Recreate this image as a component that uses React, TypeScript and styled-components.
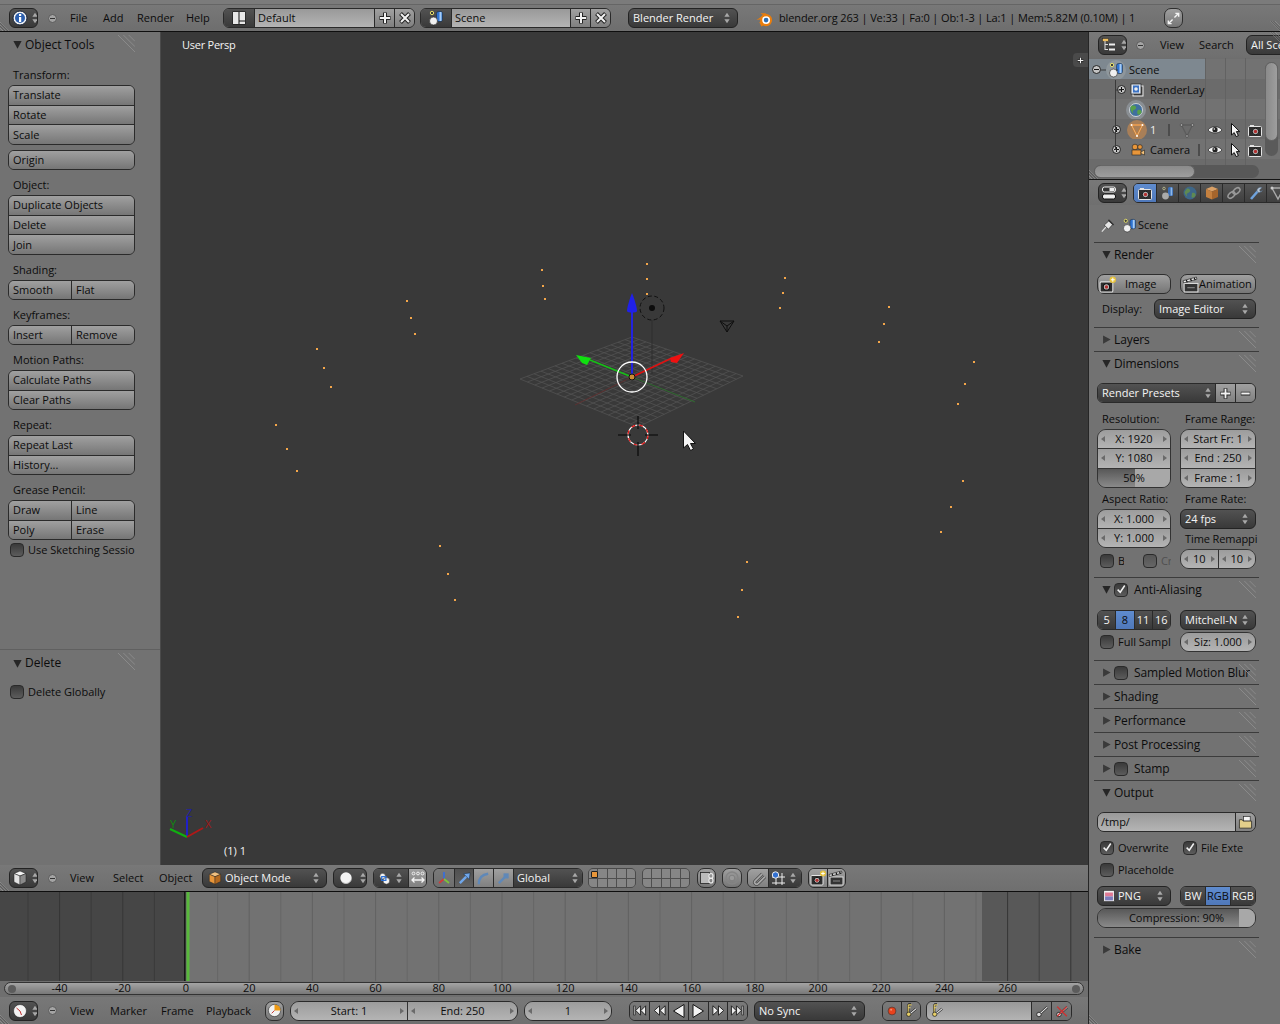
import React from 'react';
import styled, { createGlobalStyle, css } from 'styled-components';

const Global = createGlobalStyle`
  html, body { margin: 0; padding: 0; background: #727272; overflow: hidden; }
  * { box-sizing: border-box; }
  #root { width: 1280px; height: 1024px; }
`;

/* ---------- icons ---------- */
const K = '#1c1c1c';
const ICONS: Record<string, React.ReactNode> = {
  updown: <><polygon points="5,6.5 8,2 11,6.5" fill="#a8a8a8" /><polygon points="5,9.5 8,14 11,9.5" fill="#a8a8a8" /></>,
  info: <><circle cx="8" cy="8" r="7" fill="#f2f2f2" stroke="#16233a" /><circle cx="8" cy="8" r="5" fill="#2c5fae" /><rect x="7" y="4" width="2.2" height="2" fill="#fff" /><rect x="7" y="7" width="2.2" height="5" fill="#fff" /></>,
  cube: <><polygon points="8,1 14,3.5 8,6 2,3.5" fill="#f4f4f4" stroke={K} strokeWidth=".5" /><polygon points="2,3.5 8,6 8,15 2,12" fill="#e2e2e2" stroke={K} strokeWidth=".5" /><polygon points="14,3.5 8,6 8,15 14,12" fill="#8a8a8a" stroke={K} strokeWidth=".5" /></>,
  layout: <><rect x="1.5" y="1.5" width="13" height="13" fill="#111" /><rect x="2" y="2" width="5.5" height="12" fill="#e8e8e8" /><rect x="8.5" y="2" width="5.5" height="8.5" fill="#e8e8e8" /><rect x="8.5" y="11.5" width="5.5" height="2.5" fill="#e8e8e8" /></>,
  scene: <><rect x="8.5" y="1.5" width="6" height="10" rx="2" fill="#2f72cf" stroke="#123" strokeWidth=".5" /><rect x="11.5" y="2" width="2" height="9" fill="#a7cdf5" /><circle cx="5.5" cy="11" r="4" fill="#f0f0f0" stroke="#222" strokeWidth=".6" /><circle cx="4" cy="3" r="1.7" fill="#3a3a3a" stroke="#e6e06a" /></>,
  plus: <><path d="M8 2.5v11M2.5 8h11" stroke="#222" strokeWidth="4" /><path d="M8 3v10M3 8h10" stroke="#f2f2f2" strokeWidth="2" /></>,
  minus: <><path d="M3 8h10" stroke="#222" strokeWidth="4" /><path d="M3.5 8h9" stroke="#f2f2f2" strokeWidth="2" /></>,
  close: <><path d="M3.5 3.5l9 9M12.5 3.5l-9 9" stroke="#222" strokeWidth="4" /><path d="M4 4l8 8M12 4l-8 8" stroke="#f2f2f2" strokeWidth="2" /></>,
  blender: <><path d="M0.5 9.5L7 5 4 3h5l5 4" fill="#e87d0d" /><path d="M6 15l-2-4" stroke="#e87d0d" strokeWidth="2" /><circle cx="9.5" cy="9.5" r="4.7" fill="#fff" stroke="#e87d0d" strokeWidth="2" /><circle cx="9.5" cy="9.5" r="2.2" fill="#2c6eb5" /></>,
  fullscreen: <><path d="M9 7l4-4M10 2.5h3.5V6M7 9l-4 4M6 13.5H2.5V10" stroke="#f4f4f4" strokeWidth="1.5" fill="none" /></>,
  outliner: <><rect x="1.5" y="1.5" width="6" height="3" fill="#f0c060" stroke="#222" strokeWidth=".5" /><path d="M4 4v9M4 7.5h3M4 12.5h3" stroke="#ddd" /><rect x="8" y="6.5" width="6" height="2" fill="#eee" /><rect x="8" y="11.5" width="6" height="2" fill="#eee" /></>,
  buttons: <><rect x="1.5" y="2" width="13" height="5" rx="2" fill="#333" stroke="#eee" /><rect x="8.5" y="3" width="5" height="3" fill="#eee" /><rect x="1.5" y="9" width="13" height="5" rx="2" fill="#eee" stroke="#111" /></>,
  cam: <><rect x="1.5" y="4.5" width="13" height="10" rx="1" fill="#2d2d2d" stroke="#e4e4e4" /><rect x="3" y="3" width="4" height="2" fill="#e4e4e4" /><circle cx="8.5" cy="9.5" r="3.2" fill="#bbb" stroke="#111" /><circle cx="8.5" cy="9.5" r="1.7" fill="#b33030" /></>,
  camNew: <><rect x="1" y="5.5" width="12" height="9.5" rx="1" fill="#2d2d2d" stroke="#e4e4e4" /><circle cx="7" cy="10.3" r="3" fill="#bbb" stroke="#111" /><circle cx="7" cy="10.3" r="1.6" fill="#b33030" /><circle cx="13" cy="3.5" r="3" fill="#e6c23a" /><path d="M13 1.7v3.6M11.2 3.5h3.6" stroke="#fff" /></>,
  clapper: <><rect x="2" y="7" width="13" height="8" fill="#333" stroke="#ddd" /><path d="M1.5 6.5L14 3 13.5 1 1 4.5z" fill="#eee" stroke="#111" strokeWidth=".6" /><path d="M4 3.8l1 2M8 2.7l1 2M11.5 1.8l1 2" stroke="#111" strokeWidth="1.2" /><path d="M5 11h7" stroke="#888" /></>,
  sceneTab: <><rect x="8" y="2" width="5" height="9" rx="1.5" fill="#3a6fb8" /><rect x="10.6" y="2.5" width="1.6" height="8" fill="#8fb8e8" /><circle cx="5.5" cy="11" r="3.4" fill="#aaa" /><circle cx="4" cy="3.5" r="1.3" fill="#555" stroke="#cc9" strokeWidth=".7" /></>,
  world: <><circle cx="8" cy="8" r="6.5" fill="#3f6f9f" stroke="#e8e8e8" strokeWidth=".8" /><path d="M5 3.5c3 0 4 2 2.5 3.5S4 8 5 10.5 3 10 2.5 7 4 3.5 5 3.5zM10 8c2-1 4 .5 3.5 2.5S10 13.5 9.5 12 9 8.5 10 8z" fill="#58a04a" /></>,
  worldDim: <><circle cx="8" cy="8" r="6.5" fill="#3e6688" /><path d="M5 3.5c3 0 4 2 2.5 3.5S4 8 5 10.5 3 10 2.5 7zM10 8c2-1 4 .5 3.5 2.5S10 13.5 9.5 12z" fill="#5f8a52" /></>,
  box: <><polygon points="8,1.5 14,4 8,6.5 2,4" fill="#d9a066" /><polygon points="2,4 8,6.5 8,14.5 2,12" fill="#c4803f" /><polygon points="14,4 8,6.5 8,14.5 14,12" fill="#a5652c" /></>,
  boxBright: <><polygon points="8,1 14.5,3.8 8,6.5 1.5,3.8" fill="#f0c080" stroke="#222" strokeWidth=".5" /><polygon points="1.5,3.8 8,6.5 8,15 1.5,12" fill="#e8963a" stroke="#222" strokeWidth=".5" /><polygon points="14.5,3.8 8,6.5 8,15 14.5,12" fill="#b56a20" stroke="#222" strokeWidth=".5" /></>,
  link: <><ellipse cx="5.5" cy="10" rx="4" ry="2.5" transform="rotate(-40 5.5 10)" fill="none" stroke="#9a9a9a" strokeWidth="1.5" /><ellipse cx="10.5" cy="6" rx="4" ry="2.5" transform="rotate(-40 10.5 6)" fill="none" stroke="#9a9a9a" strokeWidth="1.5" /></>,
  wrench: <><path d="M3 14L10 6" stroke="#6fa2dc" strokeWidth="2.6" /><path d="M9 6.5A3.6 3.6 0 0 1 14 2.5L11.5 5l1 1.5 2-1A3.6 3.6 0 0 1 9 6.5z" fill="#b8c6d6" stroke="#46607c" strokeWidth=".5" /></>,
  meshTab: <><path d="M2 3h12L8 14z" fill="none" stroke="#aaa" strokeWidth="1.4" /><circle cx="2" cy="3" r="1.5" fill="#ccc" /><circle cx="14" cy="3" r="1.5" fill="#ccc" /></>,
  mesh: <><path d="M2.5 3h11L8 14z" fill="none" stroke="#d77a1c" strokeWidth="1.8" /><path d="M2.5 3h11L8 14z" fill="none" stroke="#f0f0f0" strokeWidth=".5" /><circle cx="2.5" cy="3" r="1" fill="#fff" /><circle cx="13.5" cy="3" r="1" fill="#fff" /><circle cx="8" cy="14" r="1" fill="#fff" /></>,
  meshData: <><path d="M2.5 3h11L8 14z" fill="none" stroke="#5c5c5c" strokeWidth="1.3" /><circle cx="2.5" cy="3" r="1.3" fill="#aaa" stroke="#333" strokeWidth=".5" /><circle cx="13.5" cy="3" r="1.3" fill="#aaa" stroke="#333" strokeWidth=".5" /><circle cx="8" cy="14" r="1.3" fill="#aaa" stroke="#333" strokeWidth=".5" /></>,
  camObj: <><circle cx="6" cy="5" r="2.8" fill="#e8963a" stroke="#222" strokeWidth=".6" /><circle cx="11" cy="5" r="2.3" fill="#e8963a" stroke="#222" strokeWidth=".6" /><rect x="3" y="8" width="9" height="5" fill="#e8963a" stroke="#222" strokeWidth=".6" /><polygon points="12,10 15.5,8 15.5,13 12,11.5" fill="#f4c27a" stroke="#222" strokeWidth=".6" /></>,
  layers: <><rect x="4" y="4" width="10" height="10" fill="#444" stroke="#eee" /><rect x="2" y="2" width="10" height="10" fill="#dfe6f0" stroke="#222" strokeWidth=".7" /><rect x="4" y="3.5" width="6" height="7" fill="#3b72c4" /><circle cx="7" cy="7" r="1.8" fill="#eee" /></>,
  eye: <><path d="M1 8c3-4.5 11-4.5 14 0-3 4-11 4-14 0z" fill="#f4f4f4" stroke="#222" strokeWidth=".7" /><circle cx="8" cy="7.7" r="2.6" fill="#222" /><circle cx="7.3" cy="7" r=".8" fill="#fff" /></>,
  pointer: <path d="M4.5 1.5v11.5l2.7-2.4 2 4 2.2-1-2-4h3.3z" fill="#f4f4f4" stroke="#111" />,
  pin: <><path d="M2 14.5l4.5-5" stroke="#dedede" strokeWidth="1.4" /><path d="M4.5 7.5L9.5 3l4 4-4.5 5z" fill="#e4e4e4" stroke="#333" strokeWidth=".8" /><path d="M9 2l5.5 5.5" stroke="#333" strokeWidth="1.6" /></>,
  folder: <><rect x="6" y="1.5" width="7" height="5" fill="#f6f6f6" stroke="#222" strokeWidth=".7" /><path d="M1.5 5h3l1 1.5h9v7.5h-13z" fill="#e3cf8b" stroke="#222" strokeWidth=".8" /></>,
  png: <><rect x="2" y="1.5" width="12" height="13" fill="#f2f2f2" stroke="#222" strokeWidth=".7" /><rect x="3.5" y="4" width="9" height="4.5" fill="#e07a94" /><rect x="3.5" y="8.5" width="9" height="4.5" fill="#7c7cbc" /></>,
  sphere: <><circle cx="8" cy="8" r="6.5" fill="#f4f4f4" /><path d="M3 12a6.5 6.5 0 0 0 11-2" stroke="#bbb" fill="none" /></>,
  pivot: <><circle cx="6" cy="5.5" r="3" fill="#f4f4f4" stroke="#222" strokeWidth=".5" /><circle cx="10" cy="10.5" r="3.5" fill="#f4f4f4" stroke="#222" strokeWidth=".5" /><rect x="5" y="6" width="4.5" height="4" fill="none" stroke="#2a6fd6" strokeWidth="1.3" /></>,
  center: <><circle cx="3.5" cy="3.5" r="1.4" fill="none" stroke="#eee" /><circle cx="8" cy="3.5" r="1.4" fill="none" stroke="#eee" /><circle cx="12.5" cy="3.5" r="1.4" fill="none" stroke="#eee" /><path d="M2 10h12M4.5 7.5L2 10l2.5 2.5M11.5 7.5L14 10l-2.5 2.5" fill="none" stroke="#f4f4f4" strokeWidth="1.3" /></>,
  manip: <><path d="M8 9V2" stroke="#3a6fd6" strokeWidth="1.8" /><path d="M8 9l-5 4" stroke="#d13a3a" strokeWidth="1.8" /><path d="M8 9l5 4" stroke="#7ec23a" strokeWidth="1.8" /></>,
  arrow: <><path d="M3 13L11 5" stroke="#6fa6ea" strokeWidth="2.6" /><polygon points="14,2 13,9 7,3" fill="#6fa6ea" stroke="#123" strokeWidth=".5" /></>,
  curve: <path d="M3 14c0-6 3-10 10-11" fill="none" stroke="#5f88b8" strokeWidth="2.6" />,
  scaleT: <><path d="M3 13L9 7" stroke="#5f88b8" strokeWidth="2.6" /><rect x="8" y="2.5" width="5.5" height="5.5" fill="#5f88b8" /></>,
  lock: <><rect x="1.5" y="2.5" width="9" height="11" fill="#bbb" stroke="#222" strokeWidth=".8" /><ellipse cx="12" cy="6" rx="2" ry="2.5" fill="none" stroke="#eee" strokeWidth="1.2" /><ellipse cx="12" cy="10.5" rx="2" ry="2.5" fill="none" stroke="#eee" strokeWidth="1.2" /></>,
  target: <><circle cx="8" cy="8" r="6" fill="none" stroke="#858585" strokeWidth="1.4" /><circle cx="8" cy="8" r="2.8" fill="#9a9a9a" stroke="#808080" /></>,
  magnet: <><path d="M12 3L4.5 10.5a2 2 0 0 0 3 3L15 6" fill="none" stroke="#4a4a4a" strokeWidth="3.4" /><path d="M12 3L4.5 10.5a2 2 0 0 0 3 3L15 6" fill="none" stroke="#a8a8a8" strokeWidth="1.8" /></>,
  snap: <><path d="M6 2v13M12 3v12M2 7h13M2 13h13" stroke="#eee" /><circle cx="5.5" cy="5" r="3.2" fill="#3170d2" stroke="#eee" /></>,
  clock: <><circle cx="8" cy="8" r="6.5" fill="#f2f2f2" stroke="#222" strokeWidth=".6" /><path d="M8 8L4.5 5M8 8l1.5 4" stroke="#c23030" /></>,
  clockO: <><circle cx="8" cy="8" r="6.5" fill="#f2f2f2" stroke="#222" strokeWidth=".6" /><path d="M8 8V1.5A6.5 6.5 0 0 1 14.5 8z" fill="#ee9a14" /><path d="M8 8L5 11" stroke="#c23030" /></>,
  jumpS: <><path d="M2.5 3v10" stroke="#111" strokeWidth="2.2" /><path d="M2.5 3.5v9" stroke="#eee" strokeWidth=".8" /><path d="M9 3L4 8l5 5zM14.5 3l-5 5 5 5z" fill="#eee" stroke="#111" strokeWidth=".9" /></>,
  prevK: <path d="M8 3L2.5 8 8 13zM14 3L8.5 8l5.5 5z" fill="#eee" stroke="#111" strokeWidth=".9" />,
  rev: <path d="M13 1.5L2.5 8 13 14.5z" fill="#f4f4f4" stroke="#111" />,
  play: <path d="M3 1.5L13.5 8 3 14.5z" fill="#f4f4f4" stroke="#111" />,
  nextK: <path d="M2 3l5.5 5L2 13zM8 3l5.5 5L8 13z" fill="#eee" stroke="#111" strokeWidth=".9" />,
  jumpE: <><path d="M13.5 3v10" stroke="#111" strokeWidth="2.2" /><path d="M13.5 3.5v9" stroke="#eee" strokeWidth=".8" /><path d="M1.5 3l5 5-5 5zM7 3l5 5-5 5z" fill="#eee" stroke="#111" strokeWidth=".9" /></>,
  rec: <><circle cx="8" cy="8" r="4.5" fill="#e8421c" stroke="#333" strokeWidth=".7" /><circle cx="7" cy="6.5" r="1.2" fill="#f58a6a" /></>,
  keyY: <><path d="M4.5 1.5v9M4.5 1.5h3" stroke="#222" strokeWidth="2.4" fill="none" /><path d="M4.5 2v8.5M4.5 2H8M4.5 5H7" stroke="#e7cf68" strokeWidth="1.2" fill="none" /><circle cx="5" cy="12" r="2.3" fill="#e7cf68" stroke="#222" strokeWidth=".8" /><path d="M7 11l6-5" stroke="#222" strokeWidth="2.4" /><path d="M7 11l6-5" stroke="#eee" strokeWidth="1.2" /></>,
  keyW: <><circle cx="4.5" cy="12" r="2.6" fill="#ddd" stroke="#222" /><path d="M6.5 10.5L14 3.5" stroke="#222" strokeWidth="2.6" /><path d="M6.5 10.5L14 3.5" stroke="#eee" strokeWidth="1.2" /></>,
  keyX: <><circle cx="4.5" cy="12" r="2.6" fill="#ddd" stroke="#222" /><path d="M6.5 10.5L14 3.5" stroke="#222" strokeWidth="2.6" /><path d="M6.5 10.5L14 3.5" stroke="#eee" strokeWidth="1.2" /><path d="M2.5 3l11 11M13.5 3l-11 11" stroke="#d03030" strokeWidth="1.5" /></>,
  grip: <path d="M0 0l16 16M5 0l11 11M10 0l6 6" stroke="#8c8c8c" strokeWidth=".9" fill="none" />,
  corner: <><path d="M0 4l12 12M0 8l8 8M0 12l4 4" stroke="#a0a0a0" strokeWidth=".8" /><path d="M0 5l11 11M0 9l7 7" stroke="#3c3c3c" strokeWidth=".6" /></>,
  cornerTR: <><path d="M0 0l16 16M4 0l12 12M8 0l8 8" stroke="#a0a0a0" strokeWidth=".8" /><path d="M1 0l15 15M5 0l11 11" stroke="#3c3c3c" strokeWidth=".6" /></>,
  arrowOpen: <polygon points="2,3 14,3 8,14" fill="#262626" />,
  arrowClosed: <polygon points="3,2 3,14 14,8" fill="#3a3a3a" />,
  check: <path d="M3.5 7.5L7 11l6-9" fill="none" stroke="#f2f2f2" strokeWidth="2" />,
};

const Glyph = styled.svg<{ $m?: string }>`
  display: block;
  flex: none;
  margin: ${p => p.$m ?? '0'};
`;
const Icon = ({ n, s = 16, m }: { n: string; s?: number; m?: string }) => (
  <Glyph viewBox="0 0 16 16" width={s} height={s} $m={m}>{ICONS[n]}</Glyph>
);

/* ---------- frame ---------- */
const FONT = `"Open Sans", "Liberation Sans", sans-serif`;
const Root = styled.div`
  position: relative;
  width: 1280px;
  height: 1024px;
  overflow: hidden;
  background: #727272;
  font: 11px/14px ${FONT};
  color: #0c0c0c;
  display: flex;
  flex-direction: column;
`;
const Body = styled.div`
  flex: 1;
  display: flex;
  min-height: 0;
`;
const LeftCol = styled.div`
  width: 1088px;
  display: flex;
  flex-direction: column;
`;
const RightCol = styled.div`
  width: 192px;
  border-left: 1px solid #262626;
  display: flex;
  flex-direction: column;
  overflow: hidden;
`;
const Bar = styled.div<{ $h: number; $pad?: number; $top?: boolean; $black?: boolean }>`
  position: relative;
  flex: none;
  height: ${p => p.$h}px;
  display: flex;
  align-items: center;
  padding: ${p => (p.$top ? 5 : 0)}px 0 0 ${p => p.$pad ?? 9}px;
  overflow: hidden;
  ${p => p.$black && 'border-bottom: 1px solid #0e0e0e;'}
  background: ${p => (p.$top
    ? 'linear-gradient(#7b7b7b 0 4px, #656565 4px 5px, #787878 5px, #6e6e6e)'
    : 'linear-gradient(#787878, #6f6f6f)')};
`;
const CornerMark = styled.div<{ $l?: number; $r?: number; $t?: number; $b?: number }>`
  position: absolute;
  ${p => p.$l != null && `left:${p.$l}px;`}
  ${p => p.$r != null && `right:${p.$r}px;`}
  ${p => p.$t != null && `top:${p.$t}px;`}
  ${p => p.$b != null && `bottom:${p.$b}px;`}
`;

/* ---------- buttons ---------- */
const darkFace = css`
  background: linear-gradient(#525252, #393939);
  color: #f4f4f4;
`;
const Sel = styled.div<{ $w: number; $ml?: number; $pl?: number }>`
  flex: none;
  width: ${p => p.$w}px;
  margin-left: ${p => p.$ml ?? 0}px;
  height: 20px;
  border: 1px solid #232323;
  border-radius: 6px;
  ${darkFace}
  display: flex;
  align-items: center;
  padding: 0 3px 0 ${p => p.$pl ?? 4}px;
  white-space: nowrap;
  overflow: hidden;
`;
const SelText = styled.span`
  flex: 1;
  overflow: hidden;
`;
const Dot = styled.div<{ $ml?: number }>`
  flex: none;
  width: 9px;
  height: 9px;
  margin-left: ${p => p.$ml ?? 10}px;
  border-radius: 50%;
  background: #a4a4a4;
  border: 1px solid #5a5a5a;
  position: relative;
  &::after {
    content: '';
    position: absolute;
    left: 1px;
    right: 1px;
    top: 3px;
    height: 1px;
    background: #333;
  }
`;
const Menu = styled.div<{ $w: number; $ml?: number }>`
  flex: none;
  width: ${p => p.$w}px;
  margin-left: ${p => p.$ml ?? 0}px;
  white-space: nowrap;
`;
const StatusText = styled(Menu)`
  letter-spacing: -0.12px;
`;
const Joined = styled.div<{ $w: number; $ml?: number; $r?: number }>`
  flex: none;
  display: flex;
  width: ${p => p.$w}px;
  margin-left: ${p => p.$ml ?? 0}px;
  height: 20px;
  border: 1px solid #2a2a2a;
  border-radius: ${p => p.$r ?? 6}px;
  overflow: hidden;
`;
const Seg = styled.div<{ $w?: number; $dark?: boolean; $on?: boolean; $input?: boolean; $center?: boolean; $dim?: boolean; $press?: boolean }>`
  flex: ${p => (p.$w ? 'none' : '1')};
  ${p => p.$w && `width:${p.$w}px;`}
  min-width: 0;
  display: flex;
  align-items: center;
  justify-content: ${p => (p.$center ? 'center' : 'flex-start')};
  white-space: nowrap;
  overflow: hidden;
  background: ${p =>
    p.$on
      ? 'linear-gradient(#5f8ccf,#4f78ba)'
      : p.$dark
        ? 'linear-gradient(#525252,#393939)'
        : p.$input
          ? 'linear-gradient(#999,#b4b4b4)'
          : p.$press
            ? 'linear-gradient(#505050,#626262)'
            : p.$dim
              ? 'linear-gradient(#7a7a7a,#6e6e6e)'
              : 'linear-gradient(#a0a0a0,#808080)'};
  color: ${p => (p.$dark ? '#f4f4f4' : '#0c0c0c')};
  & + & {
    border-left: 1px solid #2a2a2a;
  }
`;
const SegLabel = styled.span<{ $pl?: number }>`
  padding-left: ${p => p.$pl ?? 3}px;
`;
const LayerGrid = styled.div<{ $ml: number }>`
  flex: none;
  width: 48px;
  height: 20px;
  margin-left: ${p => p.$ml}px;
  border: 1px solid #4a4a4a;
  border-radius: 5px;
  overflow: hidden;
  display: grid;
  grid-template-columns: repeat(5, 1fr);
  grid-template-rows: 1fr 1fr;
  gap: 1px;
  background: #4e4e4e;
`;
const LayerCell = styled.div<{ $active?: boolean }>`
  background: #868686;
  position: relative;
  ${p =>
    p.$active &&
    `&::after{content:'';position:absolute;left:2px;top:2px;width:5px;height:5px;border-radius:1px;background:#e8963a;border:1px solid #222;}`}
`;

/* tool shelf */
const Shelf = styled.div`
  position: relative;
  width: 161px;
  background: #727272;
  border-right: 1px solid #4a4a4a;
  padding-left: 8px;
  display: flex;
  flex-direction: column;
  flex: none;
`;
const ShelfHead = styled.div<{ $line?: boolean }>`
  position: relative;
  height: 24px;
  margin: ${p => (p.$line ? '89px 0 0 -8px' : '0 0 4px -8px')};
  padding: 1px 0 0 12px;
  display: flex;
  align-items: center;
  font-size: 12px;
  ${p => p.$line && 'border-top: 1px solid #606060; height: 26px;'}
`;
const GripSlot = styled.div<{ $r: number }>`
  position: absolute;
  right: ${p => p.$r}px;
  top: 3px;
`;
const ShelfLabel = styled.div`
  height: 20px;
  margin-top: 5px;
  padding: 3px 0 0 5px;
  white-space: nowrap;
`;
const ToolGroup = styled.div<{ $rows: number; $mt?: number }>`
  width: 127px;
  height: ${p => p.$rows * 20}px;
  margin-top: ${p => p.$mt ?? 0}px;
  border: 1px solid #2b2b2b;
  border-radius: 6px;
  overflow: hidden;
  display: flex;
  flex-direction: column;
`;
const ToolRow = styled.div`
  flex: 1;
  display: flex;
  min-height: 0;
  & + & {
    border-top: 1px solid #2b2b2b;
  }
`;
const ToolBtn = styled.div`
  flex: 1;
  display: flex;
  align-items: center;
  padding-left: 4px;
  background: linear-gradient(#a0a0a0, #767676);
  white-space: nowrap;
  & + & {
    border-left: 1px solid #2b2b2b;
  }
`;
const CheckRow = styled.div<{ $mt?: number; $ml?: number; $dim?: boolean; $w?: number }>`
  display: flex;
  align-items: center;
  height: 20px;
  margin-top: ${p => p.$mt ?? 0}px;
  margin-left: ${p => p.$ml ?? 0}px;
  ${p => p.$w && `width:${p.$w}px;`}
  white-space: nowrap;
  overflow: hidden;
  color: ${p => (p.$dim ? '#505050' : '#0c0c0c')};
`;
const CheckBox = styled.div<{ $on?: boolean; $dim?: boolean; $mr?: number }>`
  flex: none;
  width: 14px;
  height: 14px;
  margin-right: ${p => p.$mr ?? 4}px;
  border-radius: 4px;
  border: 1px solid #2a2a2a;
  background: ${p => (p.$dim ? 'linear-gradient(#555,#666)' : 'linear-gradient(#3a3a3a,#5c5c5c)')};
  display: flex;
  align-items: center;
  justify-content: center;
`;
const Check = ({ on, dim, mr }: { on?: boolean; dim?: boolean; mr?: number }) => (
  <CheckBox $on={on} $dim={dim} $mr={mr}>{on && <Icon n="check" s={12} />}</CheckBox>
);

/* viewport */
const ViewRow = styled.div`
  flex: 1;
  display: flex;
  min-height: 0;
`;
const Viewport = styled.div`
  position: relative;
  flex: 1;
  background: #393939;
  overflow: hidden;
`;
const Overlay = styled.div<{ $l: number; $t: number }>`
  position: absolute;
  left: ${p => p.$l}px;
  top: ${p => p.$t}px;
  color: #f4f4f4;
  white-space: nowrap;
`;
const PerspLabel = styled(Overlay)`
  letter-spacing: -0.25px;
`;
const Scene3D = styled.svg`
  position: absolute;
  inset: 0;
  width: 927px;
  height: 833px;
`;
const TabPlus = styled.div`
  position: absolute;
  right: 0;
  top: 21px;
  width: 15px;
  height: 14px;
  background: #4a4a4a;
  border-radius: 4px 0 0 4px;
  display: flex;
  align-items: center;
  justify-content: center;
`;

/* grid math */
const C = { L: [520, 379], T: [632, 337], R: [743, 376], B: [638, 427] };
const P = (u: number, v: number) => {
  const lerp = (a: number[], b: number[], t: number) => [a[0] + (b[0] - a[0]) * t, a[1] + (b[1] - a[1]) * t];
  const a = lerp(C.L, C.T, u);
  const b = lerp(C.B, C.R, u);
  return lerp(a, b, v);
};
const GRID_N = 16;
const gridLines: number[][] = [];
for (let i = 0; i <= GRID_N; i++) {
  const t = i / GRID_N;
  gridLines.push([...P(t, 0), ...P(t, 1)]);
  gridLines.push([...P(0, t), ...P(1, t)]);
}
const DOTS = [
  [542, 270], [543, 286], [545, 299], [647, 264], [647, 279], [647, 294], [785, 278], [783, 293], [780, 308],
  [889, 307], [884, 324], [879, 342], [974, 362], [965, 384], [958, 404], [963, 481], [951, 507], [941, 532],
  [747, 562], [742, 590], [738, 617], [440, 546], [448, 574], [455, 600], [276, 425], [287, 449], [297, 471],
  [317, 349], [324, 368], [331, 387], [407, 301], [411, 318], [415, 334],
];

const Scene = () => (
  <Scene3D viewBox="161 32 927 833" fontFamily={FONT} fontSize="11">
    <g stroke="#525252" strokeWidth=".8">
      {gridLines.map((l, i) => <line key={i} x1={l[0]} y1={l[1]} x2={l[2]} y2={l[3]} />)}
    </g>
    <line x1="575" y1="405" x2="632" y2="377" stroke="#5c3030" />
    <line x1="632" y1="377" x2="695" y2="402" stroke="#2f6a2f" />
    <line x1="652" y1="320" x2="652" y2="374" stroke="#2e2e2e" />
    <line x1="632" y1="377" x2="672" y2="358" stroke="#e01010" strokeWidth="1.5" />
    <line x1="632" y1="377" x2="590" y2="360" stroke="#16c016" strokeWidth="1.5" />
    <line x1="632" y1="377" x2="632" y2="310" stroke="#2222e0" strokeWidth="2" />
    <polygon points="684,353 670,358 671,362 677,363" fill="#f01010" />
    <polygon points="576,355 591,358 587,365 582,363" fill="#10e010" />
    <path d="M632 293c2 5 5 14 5 18 0 2-10 2-10 0 0-4 3-13 5-18z" fill="#2020e8" />
    <circle cx="632" cy="377" r="15" fill="none" stroke="#fff" strokeWidth="1.3" />
    <circle cx="632" cy="377" r="3" fill="#c98b33" stroke="#111" />
    <circle cx="652" cy="308" r="12" fill="none" stroke="#111" strokeDasharray="4 2.5" />
    <circle cx="652" cy="308" r="3" fill="#0c0c0c" />
    <path d="M720 321l14 0-7 11zM720 321l7 5 7-5M727 326v6" fill="none" stroke="#0e0e0e" />
    <circle cx="638" cy="435" r="10" fill="none" stroke="#fff" strokeWidth="1.2" />
    <circle cx="638" cy="435" r="10" fill="none" stroke="#e01010" strokeWidth="1.2" strokeDasharray="4 4" />
    <path d="M618 435h13M645 435h13M638 416v13M638 442v14" stroke="#050505" strokeWidth="1.1" />
    {DOTS.map(([x, y], i) => <rect key={i} x={x - 1} y={y - 1} width="2" height="2" fill="#f4a64a" />)}
    <path d="M683.5 431v17l4-3.5 3 6 3-1.5-3-5.5h5z" fill="#f4f4f4" stroke="#111" />
    <line x1="187" y1="837" x2="187" y2="817" stroke="#2020c8" strokeWidth="2" />
    <line x1="187" y1="837" x2="170" y2="829" stroke="#10b010" strokeWidth="2" />
    <line x1="187" y1="837" x2="203" y2="828" stroke="#b01818" strokeWidth="2" />
    <text x="186" y="817" fill="#2222a0">Z</text>
    <text x="170" y="828" fill="#108a10">Y</text>
    <text x="205" y="828" fill="#a01818">X</text>
  </Scene3D>
);

/* timeline */
const Timeline = styled.svg`
  display: block;
  flex: none;
  width: 1088px;
  height: 89px;
`;
const TL_LINES: number[] = [];
for (let f = -50; f <= 290; f += 10) TL_LINES.push(f);
const fx = (f: number) => 186 + f * 3.16;
const ScrollArea = styled.div`
  position: relative;
  flex: none;
  height: 16px;
  padding: 1px 4px 0;
  background: #6f6f6f;
`;
const ScaleTrack = styled.div`
  height: 13px;
  border: 1px solid #333;
  border-radius: 7px;
  background: linear-gradient(#a4a4a4, #787878);
  display: flex;
  align-items: center;
  justify-content: space-between;
  padding: 0 3px;
`;
const TrackKnob = styled.div`
  width: 8px;
  height: 8px;
  border-radius: 50%;
  background: #5c5c5c;
`;
const ScaleLabel = styled.span`
  position: absolute;
  top: 0;
  transform: translateX(-50%);
  white-space: nowrap;
`;

/* right column */
const TreeBox = styled.div`
  position: relative;
  flex: none;
  height: 122px;
  padding-top: 1px;
  background: #6e6e6e;
  overflow: hidden;
  border-bottom: 1px solid #141414;
`;
const TreeRow = styled.div<{ $alt?: boolean }>`
  height: 20px;
  display: flex;
  align-items: center;
  background: ${p => (p.$alt ? '#6b6b6b' : '#727272')};
`;
const NameCell = styled.div<{ $sel?: boolean; $pad: number }>`
  flex: 1;
  min-width: 0;
  height: 100%;
  padding: 1px 0 0 ${p => p.$pad}px;
  display: flex;
  align-items: center;
  white-space: nowrap;
  overflow: hidden;
  background: ${p => (p.$sel ? '#7e8890' : 'transparent')};
`;
const Expand = styled.div<{ $mr: number }>`
  flex: none;
  position: relative;
  width: 9px;
  height: 9px;
  margin-right: ${p => p.$mr}px;
  border-radius: 50%;
  background: #c4c4c4;
  border: 1px solid #222;
  &::after {
    content: '';
    position: absolute;
    left: 1px;
    right: 1px;
    top: 3px;
    height: 1px;
    background: #111;
  }
`;
const ExpandPlus = styled(Expand)`
  &::before {
    content: '';
    position: absolute;
    top: 1px;
    bottom: 1px;
    left: 3px;
    width: 1px;
    background: #111;
  }
`;
const Halo = styled.div<{ $c: string }>`
  flex: none;
  width: 16px;
  height: 16px;
  border-radius: 50%;
  background: ${p => p.$c};
  box-shadow: 0 0 0 2px ${p => p.$c};
`;
const RowName = styled.span<{ $ml?: number; $white?: boolean }>`
  margin-left: ${p => p.$ml ?? 5}px;
  color: ${p => (p.$white ? '#eee' : '#0c0c0c')};
`;
const RowSep = styled.span<{ $ml: number }>`
  flex: none;
  width: 2px;
  height: 12px;
  margin-left: ${p => p.$ml}px;
  background: #4c4c4c;
`;
const Restrict = styled.div`
  flex: none;
  width: 60px;
  margin-right: 15px;
  padding-top: 1px;
  display: grid;
  grid-template-columns: repeat(3, 20px);
  justify-items: center;
`;
const ColLine = styled.div<{ $x: number }>`
  position: absolute;
  top: 0;
  bottom: 14px;
  left: ${p => p.$x}px;
  width: 1px;
  background: #626262;
`;
const TreeLines = styled.svg`
  position: absolute;
  left: 0;
  top: 0;
  width: 60px;
  height: 122px;
  pointer-events: none;
`;
const HScroll = styled.div`
  position: absolute;
  left: 5px;
  bottom: 1px;
  width: 165px;
  height: 13px;
  border-radius: 7px;
  background: #585858;
  overflow: hidden;
`;
const VScroll = styled.div`
  position: absolute;
  right: 2px;
  top: 4px;
  width: 13px;
  height: 94px;
  border-radius: 7px;
  background: #5a5a5a;
  overflow: hidden;
`;
const HThumb = styled.div`
  width: 101px;
  height: 100%;
  border-radius: 7px;
  background: linear-gradient(#8a8a8a, #9e9e9e);
  border: 1px solid #666;
`;
const VThumb = styled.div`
  height: 79px;
  border-radius: 7px;
  background: linear-gradient(90deg, #8a8a8a, #9e9e9e);
  border: 1px solid #666;
`;
const Tabs = styled.div`
  flex: none;
  display: flex;
  margin-left: 6px;
  height: 20px;
  border-radius: 5px 0 0 5px;
  overflow: hidden;
  border: 1px solid #2a2a2a;
`;
const Tab = styled.div<{ $on?: boolean }>`
  width: 22px;
  flex: none;
  display: flex;
  align-items: center;
  justify-content: center;
  background: ${p => (p.$on ? 'linear-gradient(#5f8ccf,#4f78ba)' : 'linear-gradient(#555,#3f3f3f)')};
  & + & {
    border-left: 1px solid #2a2a2a;
  }
`;
const Props = styled.div`
  flex: 1;
  padding-left: 5px;
  background: #727272;
  position: relative;
`;
const PinRow = styled.div`
  height: 37px;
  padding: 3px 0 0 6px;
  display: flex;
  align-items: center;
`;
const PanelBox = styled.div`
  width: 165px;
  border-top: 1px solid #3c3c3c;
`;
const PanelHead = styled.div`
  position: relative;
  height: 23px;
  padding-left: 7px;
  display: flex;
  align-items: center;
  font-size: 12px;
  letter-spacing: -0.1px;
  white-space: nowrap;
`;
const PanelBody = styled.div`
  padding: 8px 3px 8px 3px;
`;
const Flex = styled.div<{ $mt?: number; $gap?: number }>`
  display: flex;
  align-items: center;
  margin-top: ${p => p.$mt ?? 0}px;
  gap: ${p => p.$gap ?? 0}px;
`;
const PushBtn = styled.div<{ $w: number; $ml?: number }>`
  flex: none;
  width: ${p => p.$w}px;
  margin-left: ${p => p.$ml ?? 0}px;
  height: 20px;
  border: 1px solid #2e2e2e;
  border-radius: 7px;
  background: linear-gradient(#a0a0a0, #767676);
  display: flex;
  align-items: center;
  padding-left: 1px;
  white-space: nowrap;
`;
const BtnLabel = styled.span<{ $ml?: number }>`
  margin-left: ${p => p.$ml ?? 0}px;
`;
const PropLabel = styled.div<{ $w?: number; $ml?: number; $mt?: number }>`
  flex: none;
  height: 20px;
  padding-top: 3px;
  margin-left: ${p => p.$ml ?? 0}px;
  margin-top: ${p => p.$mt ?? 0}px;
  ${p => p.$w && `width:${p.$w}px;`}
  white-space: nowrap;
`;
const TightLabel = styled(PropLabel)`
  letter-spacing: -0.1px;
`;
const TwoCols = styled.div`
  display: grid;
  grid-template-columns: 74px 76px;
  column-gap: 9px;
  margin: 6px 0 -2px;
`;
const Col = styled.div`
  display: flex;
  flex-direction: column;
  min-width: 0;
`;
const NumGroup = styled.div<{ $rows: number; $w?: number; $ml?: number; $mt?: number; $mb?: number }>`
  height: ${p => p.$rows * 20 - (p.$rows > 1 ? 1 : 0)}px;
  ${p => p.$w && `width:${p.$w}px; flex:none;`}
  margin: ${p => p.$mt ?? 0}px 0 ${p => p.$mb ?? 0}px ${p => p.$ml ?? 0}px;
  border: 1px solid #333;
  border-radius: 9px;
  overflow: hidden;
  display: flex;
  flex-direction: column;
`;
const numFace = css`
  min-width: 0;
  position: relative;
  display: flex;
  align-items: center;
  justify-content: space-between;
  padding: 0 3px;
  white-space: nowrap;
  background: linear-gradient(#9c9c9c, #b4b4b4);
  &::before,
  &::after {
    content: '';
    flex: none;
    border: 3px solid transparent;
    border-width: 3.5px 4px;
  }
  &::before {
    border-left-width: 0;
    border-right-color: #6a6a6a;
  }
  &::after {
    border-right-width: 0;
    border-left-color: #6a6a6a;
  }
`;
const NumField = styled.div`
  flex: 1;
  ${numFace}
  & + & {
    border-top: 1px solid #333;
  }
`;
const NumPair = styled.div`
  flex: 1;
  display: flex;
  min-height: 0;
`;
const NumCell = styled.div<{ $w?: number }>`
  flex: ${p => (p.$w ? 'none' : '1')};
  ${p => p.$w && `width:${p.$w}px;`}
  ${numFace}
  & + & {
    border-left: 1px solid #333;
  }
`;
const Slider = styled.div<{ $pct: number }>`
  flex: 1;
  min-height: 0;
  display: flex;
  align-items: center;
  justify-content: center;
  border-top: 1px solid #333;
  background:
    linear-gradient(90deg, transparent var(--p), #a8a8a8 var(--p)),
    linear-gradient(#585858, #8a8a8a);
  --p: ${p => p.$pct}%;
`;
const WideSlider = styled(Slider)`
  border-top: 0;
`;

const Panel = ({ title, open, check, children }: { title: string; open?: boolean; check?: boolean | null; children?: React.ReactNode }) => (
  <PanelBox>
    <PanelHead>
      <Icon n={open ? 'arrowOpen' : 'arrowClosed'} s={11} m="0 2px 0 0" />
      {check != null && <Check on={check} mr={6} />}
      <span>{title}</span>
      <GripSlot $r={3}><Icon n="grip" s={17} /></GripSlot>
    </PanelHead>
    {children && <PanelBody>{children}</PanelBody>}
  </PanelBox>
);

const TOOL_SECTIONS: { label: string; rows: string[][] }[] = [
  { label: 'Shading:', rows: [['Smooth', 'Flat']] },
  { label: 'Keyframes:', rows: [['Insert', 'Remove']] },
  { label: 'Motion Paths:', rows: [['Calculate Paths'], ['Clear Paths']] },
  { label: 'Repeat:', rows: [['Repeat Last'], ['History...']] },
  { label: 'Grease Pencil:', rows: [['Draw', 'Line'], ['Poly', 'Erase']] },
];
const Tools = ({ rows, mt }: { rows: string[][]; mt?: number }) => (
  <ToolGroup $rows={rows.length} $mt={mt}>
    {rows.map((r, i) => (
      <ToolRow key={i}>{r.map(t => <ToolBtn key={t}>{t}</ToolBtn>)}</ToolRow>
    ))}
  </ToolGroup>
);
const UD = () => <Icon n="updown" s={14} />;

export default function App() {
  return (
    <Root>
      <Global />
      <Bar $h={32} $top $black>
        <Sel $w={29} $pl={2}><Icon n="info" s={16} /><UD /></Sel>
        <Dot />
        <Menu $w={33} $ml={13}>File</Menu>
        <Menu $w={34}>Add</Menu>
        <Menu $w={49}>Render</Menu>
        <Menu $w={37}>Help</Menu>
        <Joined $w={192}>
          <Seg $w={30} $dark $center><Icon n="layout" s={16} /></Seg>
          <Seg $input><SegLabel>Default</SegLabel></Seg>
          <Seg $w={20} $center><Icon n="plus" s={16} /></Seg>
          <Seg $w={20} $center><Icon n="close" s={16} /></Seg>
        </Joined>
        <Joined $w={191} $ml={5}>
          <Seg $w={30} $dark $center><Icon n="scene" s={16} /></Seg>
          <Seg $input><SegLabel>Scene</SegLabel></Seg>
          <Seg $w={20} $center><Icon n="plus" s={16} /></Seg>
          <Seg $w={20} $center><Icon n="close" s={16} /></Seg>
        </Joined>
        <Sel $w={110} $ml={17}><SelText>Blender Render</SelText><UD /></Sel>
        <Icon n="blender" s={17} m="0 0 0 18px" />
        <StatusText $w={354} $ml={6}>blender.org 263 | Ve:33 | Fa:0 | Ob:1-3 | La:1 | Mem:5.82M (0.10M) | 1</StatusText>
        <PushBtn $w={19} $ml={31}><Icon n="fullscreen" s={15} /></PushBtn>
        <CornerMark $l={0} $b={0}><Icon n="corner" s={12} /></CornerMark>
        <CornerMark $r={0} $b={0}><Icon n="cornerTR" s={10} /></CornerMark>
      </Bar>
      <Body>
        <LeftCol>
          <ViewRow>
            <Shelf>
              <ShelfHead>
                <Icon n="arrowOpen" s={11} m="0 2px 0 0" />Object Tools
                <GripSlot $r={25}><Icon n="grip" s={17} /></GripSlot>
              </ShelfHead>
              <ShelfLabel>Transform:</ShelfLabel>
              <Tools rows={[['Translate'], ['Rotate'], ['Scale']]} />
              <Tools rows={[['Origin']]} mt={5} />
              <ShelfLabel>Object:</ShelfLabel>
              <Tools rows={[['Duplicate Objects'], ['Delete'], ['Join']]} />
              {TOOL_SECTIONS.map(s => (
                <React.Fragment key={s.label}>
                  <ShelfLabel>{s.label}</ShelfLabel>
                  <Tools rows={s.rows} />
                </React.Fragment>
              ))}
              <CheckRow $ml={2}><Check />Use Sketching Sessio</CheckRow>
              <ShelfHead $line>
                <Icon n="arrowOpen" s={11} m="0 2px 0 0" />Delete
                <GripSlot $r={25}><Icon n="grip" s={17} /></GripSlot>
              </ShelfHead>
              <CheckRow $ml={2} $mt={7}><Check />Delete Globally</CheckRow>
            </Shelf>
            <Viewport>
              <Scene />
              <PerspLabel $l={21} $t={6}>User Persp</PerspLabel>
              <Overlay $l={63} $t={812}>(1) 1</Overlay>
              <TabPlus><Icon n="plus" s={9} /></TabPlus>
            </Viewport>
          </ViewRow>
          <Bar $h={27} $black>
            <Sel $w={29} $pl={2}><Icon n="cube" s={16} /><UD /></Sel>
            <Dot />
            <Menu $w={43} $ml={13}>View</Menu>
            <Menu $w={46}>Select</Menu>
            <Menu $w={43}>Object</Menu>
            <Sel $w={125} $pl={5}><Icon n="boxBright" s={14} m="0 3px 0 0" /><SelText>Object Mode</SelText><UD /></Sel>
            <Sel $w={34} $ml={6} $pl={5}><Icon n="sphere" s={14} m="0 3px 0 0" /><UD /></Sel>
            <Joined $w={54} $ml={6}>
              <Seg $w={34} $dark $center><Icon n="pivot" s={15} /><UD /></Seg>
              <Seg $center><Icon n="center" s={16} /></Seg>
            </Joined>
            <Joined $w={150} $ml={6}>
              <Seg $w={20} $center $dim><Icon n="manip" s={16} /></Seg>
              <Seg $w={19} $center $press><Icon n="arrow" s={15} /></Seg>
              <Seg $w={20} $center><Icon n="curve" s={15} /></Seg>
              <Seg $w={20} $center><Icon n="scaleT" s={15} /></Seg>
              <Seg $dark><SegLabel>Global</SegLabel><SelText /><UD /></Seg>
            </Joined>
            <LayerGrid $ml={5}>{Array.from({ length: 10 }, (_, i) => <LayerCell key={i} $active={i === 0} />)}</LayerGrid>
            <LayerGrid $ml={6}>{Array.from({ length: 10 }, (_, i) => <LayerCell key={i} />)}</LayerGrid>
            <PushBtn $w={19} $ml={7}><Icon n="lock" s={16} /></PushBtn>
            <PushBtn $w={20} $ml={6}><Icon n="target" s={16} /></PushBtn>
            <Joined $w={55} $ml={5}>
              <Seg $w={20} $center><Icon n="magnet" s={15} /></Seg>
              <Seg $dark $center><Icon n="snap" s={16} /><UD /></Seg>
            </Joined>
            <Joined $w={38} $ml={6}>
              <Seg $center><Icon n="camNew" s={16} /></Seg>
              <Seg $center><Icon n="clapper" s={16} /></Seg>
            </Joined>
            <CornerMark $l={0} $b={0}><Icon n="corner" s={12} /></CornerMark>
          </Bar>
          <Timeline viewBox="0 0 1088 89">
            <rect width="1088" height="89" fill="#727272" />
            <rect width="186" height="89" fill="#464646" />
            <rect x="982" width="106" height="89" fill="#585858" />
            {TL_LINES.map(f => (
              <line key={f} x1={fx(f)} x2={fx(f)} y1="0" y2="89" stroke={f < 0 || f > 252 ? '#363636' : '#626262'} strokeWidth={f % 20 === 0 ? 1 : 0.7} />
            ))}
            <rect x="184" width="1.5" height="89" fill="#151515" />
            <rect x="186.5" width="3" height="89" fill="#58b83c" />
          </Timeline>
          <ScrollArea>
            <ScaleTrack><TrackKnob /><TrackKnob /></ScaleTrack>
            {[-40, -20, 0, 20, 40, 60, 80, 100, 120, 140, 160, 180, 200, 220, 240, 260].map(v => (
              <ScaleLabel key={v} style={{ left: fx(v) }}>{v}</ScaleLabel>
            ))}
          </ScrollArea>
          <Bar $h={27}>
            <Sel $w={29} $pl={2}><Icon n="clock" s={16} /><UD /></Sel>
            <Dot />
            <Menu $w={40} $ml={13}>View</Menu>
            <Menu $w={51}>Marker</Menu>
            <Menu $w={45}>Frame</Menu>
            <Menu $w={59}>Playback</Menu>
            <PushBtn $w={19}><Icon n="clockO" s={15} /></PushBtn>
            <Joined $w={228} $ml={6} $r={9}>
              <NumCell $w={116}><span>Start: 1</span></NumCell>
              <NumCell><span>End: 250</span></NumCell>
            </Joined>
            <Joined $w={88} $ml={6} $r={9}>
              <NumCell><span>1</span></NumCell>
            </Joined>
            <Joined $w={119} $ml={17}>
              {['jumpS', 'prevK', 'rev', 'play', 'nextK', 'jumpE'].map(n => (
                <Seg key={n} $center $dim><Icon n={n} s={n === 'rev' || n === 'play' ? 16 : 15} /></Seg>
              ))}
            </Joined>
            <Sel $w={111} $ml={6}><SelText>No Sync</SelText><UD /></Sel>
            <Joined $w={39} $ml={17}>
              <Seg $center $dim><Icon n="rec" s={14} /></Seg>
              <Seg $center $dim><Icon n="keyY" s={15} /></Seg>
            </Joined>
            <Joined $w={146} $ml={5}>
              <Seg $input><Icon n="keyY" s={15} m="0 0 0 3px" /></Seg>
              <Seg $w={20} $center $dim><Icon n="keyW" s={14} /></Seg>
              <Seg $w={20} $center $dim><Icon n="keyX" s={14} /></Seg>
            </Joined>
            <CornerMark $l={0} $b={0}><Icon n="corner" s={12} /></CornerMark>
          </Bar>
        </LeftCol>
        <RightCol>
          <Bar $h={26}>
            <Sel $w={29} $pl={2}><Icon n="outliner" s={16} /><UD /></Sel>
            <Dot $ml={9} />
            <Menu $w={39} $ml={15}>View</Menu>
            <Menu $w={47}>Search</Menu>
            <Sel $w={60}>All Scenes</Sel>
            <CornerMark $r={0} $t={0}><Icon n="cornerTR" s={10} /></CornerMark>
          </Bar>
          <TreeBox>
            <TreeRow>
              <NameCell $sel $pad={3}><Expand $mr={7} /><Halo $c="#8f979c"><Icon n="scene" /></Halo><RowName>Scene</RowName></NameCell>
              <Restrict />
            </TreeRow>
            <TreeRow $alt>
              <NameCell $pad={28}><ExpandPlus $mr={3} /><Icon n="layers" /><RowName>RenderLayers</RowName></NameCell>
              <Restrict />
            </TreeRow>
            <TreeRow>
              <NameCell $pad={39}><Halo $c="#8a8f94"><Icon n="world" /></Halo><RowName>World</RowName></NameCell>
              <Restrict />
            </TreeRow>
            <TreeRow $alt>
              <NameCell $pad={23}>
                <ExpandPlus $mr={8} /><Halo $c="#a87f58"><Icon n="mesh" /></Halo><RowName $white>1</RowName><RowSep $ml={12} />
                <Icon n="meshData" m="0 0 0 9px" />
              </NameCell>
              <Restrict><Icon n="eye" /><Icon n="pointer" /><Icon n="cam" /></Restrict>
            </TreeRow>
            <TreeRow>
              <NameCell $pad={23}><ExpandPlus $mr={8} /><Icon n="camObj" /><RowName>Camera</RowName><RowSep $ml={8} /></NameCell>
              <Restrict><Icon n="eye" /><Icon n="pointer" /><Icon n="cam" /></Restrict>
            </TreeRow>
            <TreeRow $alt />
            <TreeLines viewBox="0 0 60 122">
              <path d="M12 12h5M27 12h2M26.5 22v70M27 32h5M27 72h1M27 92h1" stroke="#3a3a3a" fill="none" />
            </TreeLines>
            <ColLine $x={116} /><ColLine $x={136} /><ColLine $x={156} />
            <VScroll><VThumb /></VScroll>
            <HScroll><HThumb /></HScroll>
            <CornerMark $l={0} $b={0}><Icon n="corner" s={12} /></CornerMark>
          </TreeBox>
          <Bar $h={25}>
            <Sel $w={29} $pl={2}><Icon n="buttons" s={16} /><UD /></Sel>
            <Tabs>
              <Tab $on><Icon n="cam" /></Tab>
              <Tab><Icon n="sceneTab" /></Tab>
              <Tab><Icon n="worldDim" /></Tab>
              <Tab><Icon n="box" /></Tab>
              <Tab><Icon n="link" /></Tab>
              <Tab><Icon n="wrench" /></Tab>
              <Tab><Icon n="meshTab" /></Tab>
            </Tabs>
          </Bar>
          <Props>
            <PinRow>
              <Icon n="pin" s={15} m="0 7px 0 0" />
              <Icon n="scene" s={15} />
              <BtnLabel $ml={1}>Scene</BtnLabel>
            </PinRow>
            <Panel title="Render" open>
              <Flex>
                <PushBtn $w={74}><Icon n="camNew" s={17} /><BtnLabel $ml={9}>Image</BtnLabel></PushBtn>
                <PushBtn $w={76} $ml={9}><Icon n="clapper" s={17} /><BtnLabel>Animation</BtnLabel></PushBtn>
              </Flex>
              <Flex $mt={5}>
                <PropLabel $w={52} $ml={5}>Display:</PropLabel>
                <Sel $w={102} $pl={4}><SelText>Image Editor</SelText><UD /></Sel>
              </Flex>
            </Panel>
            <Panel title="Layers" />
            <Panel title="Dimensions" open>
              <Joined $w={159}>
                <Seg $dark><SegLabel $pl={4}>Render Presets</SegLabel><SelText /><UD /></Seg>
                <Seg $w={20} $center><Icon n="plus" s={15} /></Seg>
                <Seg $w={20} $center><Icon n="minus" s={15} /></Seg>
              </Joined>
              <TwoCols>
                <Col>
                  <PropLabel $ml={5}>Resolution:</PropLabel>
                  <NumGroup $rows={3}>
                    <NumField><span>X: 1920</span></NumField>
                    <NumField><span>Y: 1080</span></NumField>
                    <Slider $pct={52}>50%</Slider>
                  </NumGroup>
                  <PropLabel $ml={5} $mt={1}>Aspect Ratio:</PropLabel>
                  <NumGroup $rows={2}>
                    <NumField><span>X: 1.000</span></NumField>
                    <NumField><span>Y: 1.000</span></NumField>
                  </NumGroup>
                  <Flex $mt={3}>
                    <CheckRow $ml={3}><Check />B</CheckRow>
                    <CheckRow $ml={19} $dim><Check dim />Cr</CheckRow>
                  </Flex>
                </Col>
                <Col>
                  <PropLabel $ml={5}>Frame Range:</PropLabel>
                  <NumGroup $rows={3}>
                    <NumField><span>Start Fr: 1</span></NumField>
                    <NumField><span>End : 250</span></NumField>
                    <NumField><span>Frame : 1</span></NumField>
                  </NumGroup>
                  <PropLabel $ml={5} $mt={1}>Frame Rate:</PropLabel>
                  <Sel $w={76}><SelText>24 fps</SelText><UD /></Sel>
                  <TightLabel $ml={5}>Time Remappi</TightLabel>
                  <NumGroup $rows={1}>
                    <NumPair>
                      <NumCell><span>10</span></NumCell>
                      <NumCell><span>10</span></NumCell>
                    </NumPair>
                  </NumGroup>
                </Col>
              </TwoCols>
            </Panel>
            <Panel title="Anti-Aliasing" open check>
              <Flex $mt={1}>
                <Joined $w={74}>
                  <Seg $dark $center>5</Seg><Seg $on $center>8</Seg><Seg $dark $center>11</Seg><Seg $dark $center>16</Seg>
                </Joined>
                <Sel $w={76} $ml={9}><SelText>Mitchell-N</SelText><UD /></Sel>
              </Flex>
              <Flex $mt={2}>
                <CheckRow $ml={3} $w={71}><Check />Full Sampl</CheckRow>
                <NumGroup $rows={1} $w={76} $ml={9}>
                  <NumField><span>Siz: 1.000</span></NumField>
                </NumGroup>
              </Flex>
            </Panel>
            <Panel title="Sampled Motion Blur" check={false} />
            <Panel title="Shading" />
            <Panel title="Performance" />
            <Panel title="Post Processing" />
            <Panel title="Stamp" check={false} />
            <Panel title="Output" open>
              <Joined $w={159} $r={7}>
                <Seg $input><SegLabel>/tmp/</SegLabel></Seg>
                <Seg $w={20} $center><Icon n="folder" s={15} /></Seg>
              </Joined>
              <Flex $mt={6}>
                <CheckRow $ml={3} $w={83}><Check on />Overwrite</CheckRow>
                <CheckRow><Check on />File Exte</CheckRow>
              </Flex>
              <CheckRow $ml={3} $mt={2}><Check />Placeholde</CheckRow>
              <Flex $mt={6}>
                <Sel $w={74} $pl={3}><Icon n="png" s={14} m="0 2px 0 1px" /><SelText>PNG</SelText><UD /></Sel>
                <Joined $w={76} $ml={9}>
                  <Seg $dark $center>BW</Seg><Seg $on $center>RGB</Seg><Seg $dark $center>RGB</Seg>
                </Joined>
              </Flex>
              <NumGroup $rows={1} $mt={2} $mb={1}>
                <WideSlider $pct={90}>Compression: 90%</WideSlider>
              </NumGroup>
            </Panel>
            <Panel title="Bake" />
            <CornerMark $l={0} $b={0}><Icon n="corner" s={12} /></CornerMark>
          </Props>
        </RightCol>
      </Body>
    </Root>
  );
}
